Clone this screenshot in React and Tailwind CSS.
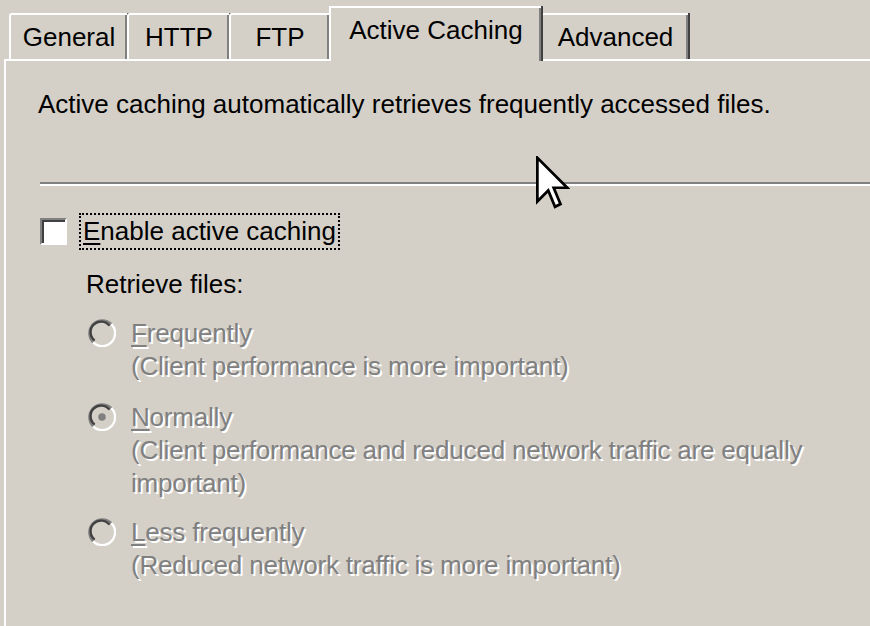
import React from 'react';

const FONT = { fontFamily: '"Liberation Sans", Arial, sans-serif' };

function Tab({ label, width, active }) {
  if (active) {
    return (
      <div
        className={`relative z-10 -mb-[2px] flex h-[55px] items-start justify-center border-l-2 border-t-2 border-white bg-[#d4d0c8] pt-[3px] shadow-[2px_0_0_#404040] ${width}`}
      >
        <div className="absolute right-0 top-0 h-full w-[2px] bg-[#808080]" />
        <span>{label}</span>
      </div>
    );
  }
  return (
    <div
      className={`relative flex h-[46px] items-start justify-center rounded-tl-[3px] border-l-2 border-t-2 border-white bg-[#d4d0c8] pt-[3px] shadow-[2px_0_0_#404040] ${width}`}
    >
      <div className="absolute right-0 top-0 h-full w-[2px] bg-[#808080]" />
      <span>{label}</span>
    </div>
  );
}

function Radio({ checked }) {
  return (
    <svg width="28" height="28" viewBox="0 0 12 12" className="shrink-0">
      <path d="M10 2.2 A5.5 5.5 0 1 0 2.2 10" fill="none" stroke="#808080" strokeWidth="1" />
      <path d="M9.2 2.9 A4.5 4.5 0 1 0 2.9 9.2" fill="none" stroke="#404040" strokeWidth="1" />
      <path d="M10 2.2 A5.5 5.5 0 0 1 2.2 10" fill="none" stroke="#ffffff" strokeWidth="1" />
      <circle cx="6" cy="6" r="4" fill="#d4d0c8" />
      {checked ? <circle cx="6" cy="6" r="1.6" fill="#808080" /> : null}
    </svg>
  );
}

function Disabled({ children }) {
  return <div className="tracking-[-0.2px] text-[#808080] [text-shadow:2px_2px_0_#ffffff]">{children}</div>;
}

function Option({ checked, accel, rest, lines, className }) {
  return (
    <div className={`flex items-start gap-[15px] ${className}`}>
      <div className="mt-[2px]">
        <Radio checked={checked} />
      </div>
      <div className="leading-[33px]">
        <Disabled>
          <span className="underline decoration-2 underline-offset-[3px]">{accel}</span>
          {rest}
        </Disabled>
        {lines.map((line) => (
          <Disabled key={line}>{line}</Disabled>
        ))}
      </div>
    </div>
  );
}

export default function App() {
  return (
    <div className="relative flex h-[626px] w-[870px] flex-col overflow-hidden bg-[#d4d0c8] text-[26px] text-black" style={FONT}>
      <div className="flex h-[59px] items-end pl-[9px]">
        <Tab label="General" width="w-[118px]" />
        <Tab label="HTTP" width="w-[102px]" />
        <Tab label="FTP" width="w-[100px]" />
        <Tab label="Active Caching" width="w-[212px]" active />
        <Tab label="Advanced" width="w-[147px]" />
      </div>

      <div className="ml-[4px] flex-1 border-l-2 border-t-2 border-white pl-[32px] pt-[27px]">
        <p className="leading-[33px]">Active caching automatically retrieves frequently accessed files.</p>

        <div className="mt-[61px] ml-[2px]">
          <div className="h-[2px] bg-[#808080]" />
          <div className="h-[2px] bg-white" />
        </div>

        <div className="mt-[26px] ml-[2px] flex h-[39px] items-center">
          <div className="h-[27px] w-[27px] border-2 border-b-white border-l-[#808080] border-r-white border-t-[#808080] bg-white shadow-[inset_2px_2px_0_#404040]" />
          <div className="ml-[12px] border-2 border-dotted border-black px-[2px] leading-[33px]">
            <span className="underline decoration-2 underline-offset-[3px]">E</span>nable active caching
          </div>
        </div>

        <div className="mt-[17px] ml-[48px] leading-[33px]">Retrieve files:</div>

        <Option className="mt-[16px] ml-[50px]" accel="F" rest="requently" lines={['(Client performance is more important)']} />
        <Option
          className="mt-[18px] ml-[50px]"
          checked
          accel="N"
          rest="ormally"
          lines={['(Client performance and reduced network traffic are equally', 'important)']}
        />
        <Option className="mt-[16px] ml-[50px]" accel="L" rest="ess frequently" lines={['(Reduced network traffic is more important)']} />
      </div>

      <svg className="absolute left-[536px] top-[156px]" width="34" height="54" viewBox="0 0 12.5 19.5">
        <path d="M0.5 0.5 L0.5 16.5 L4.5 12.5 L7 18.5 L9 17.5 L6.5 11.5 L11.5 11.5 Z" fill="#ffffff" stroke="#000000" strokeWidth="1" strokeLinejoin="miter" />
      </svg>
    </div>
  );
}
